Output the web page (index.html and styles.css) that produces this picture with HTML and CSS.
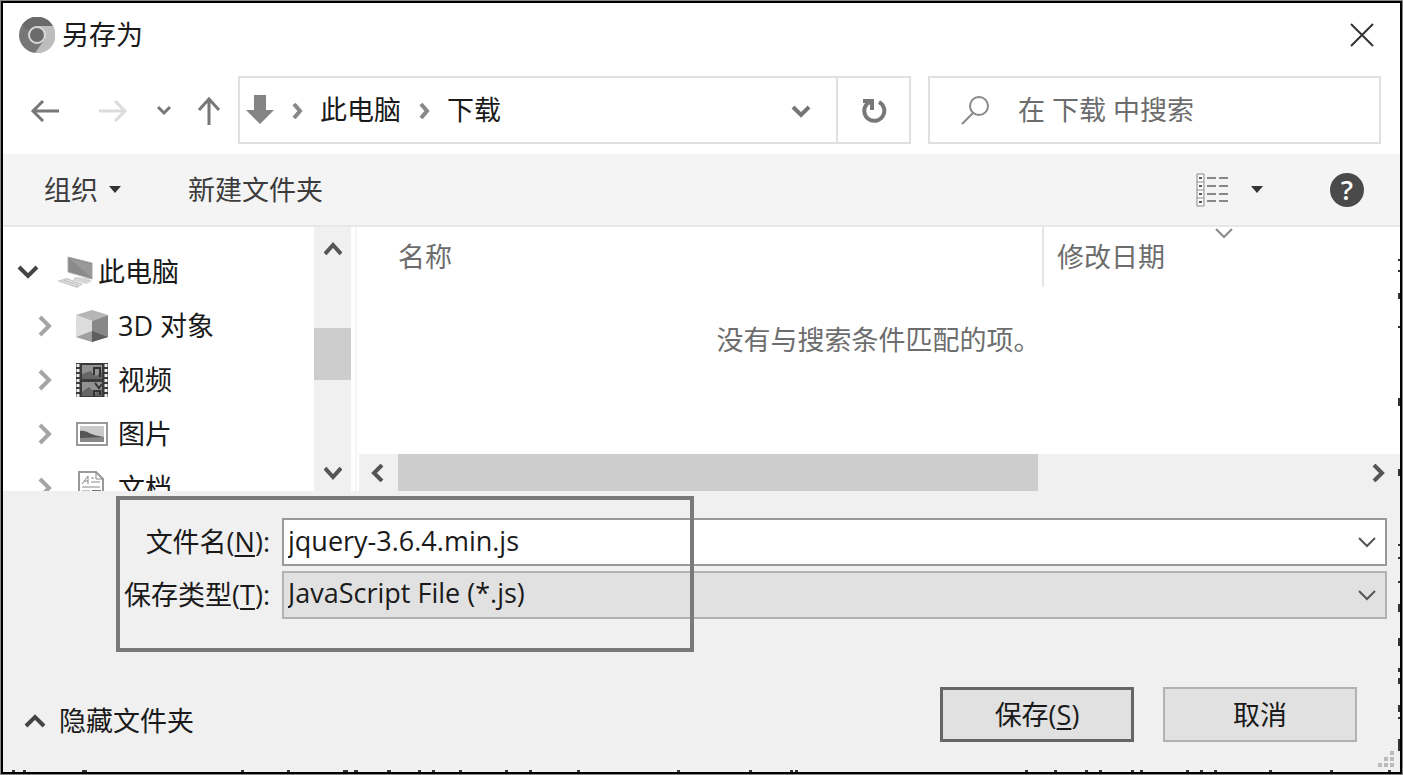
FILE: index.html
```html
<!DOCTYPE html>
<html lang="zh-CN">
<head>
    <meta charset="UTF-8">
    <meta name="viewport" content="width=device-width, initial-scale=1.0">
    <title>另存为</title>
    <link rel="stylesheet" href="styles.css">
</head>
<body>

<form class="dialog">
    <header class="title-bar">
        <svg class="logo" width="36" height="36" viewBox="0 0 36 36">
            <circle cx="18" cy="18" r="18" fill="#777"/>
            <path d="M18 9H34A18 18 0 0 1 16 36L26 22Z" fill="#bdbdbd"/>
            <path d="M3 8A18 18 0 0 1 34 9H18A9 9 0 0 0 10 14Z" fill="#6a6a6a"/>
            <circle cx="18" cy="18" r="8" fill="#6b6b6b" stroke="#d8d8d8" stroke-width="2"/>
        </svg>
        <h1>另存为</h1>
        <button type="button" class="close" aria-label="关闭">
            <svg width="24" height="24" viewBox="0 0 24 24"><path d="M1 1L23 23M23 1L1 23" stroke="#333" stroke-width="2"/></svg>
        </button>
    </header>

    <!-- 导航栏 -->
    <nav class="nav-bar">
        <button type="button" class="nav-btn" aria-label="后退">
            <svg width="30" height="24" viewBox="0 0 30 24"><path d="M29 13H3M13 3L3 13L13 23" fill="none" stroke="#777" stroke-width="3"/></svg>
        </button>
        <button type="button" class="nav-btn" aria-label="前进">
            <svg width="30" height="24" viewBox="0 0 30 24"><path d="M1 13H27M17 3L27 13L17 23" fill="none" stroke="#dcdcdc" stroke-width="3"/></svg>
        </button>
        <button type="button" class="nav-btn recent" aria-label="最近的位置">
            <svg width="14" height="12" viewBox="0 0 14 12"><path d="M1 3L7 9L13 3" fill="none" stroke="#777" stroke-width="3"/></svg>
        </button>
        <button type="button" class="nav-btn up" aria-label="向上">
            <svg width="24" height="30" viewBox="0 0 24 30"><path d="M12 30V4M2 15L12 4L22 15" fill="none" stroke="#777" stroke-width="3"/></svg>
        </button>
        <div class="address">
            <svg width="28" height="30" viewBox="0 0 28 30"><path d="M8 0H20V15H28L14 29L0 15H8Z" fill="#848484"/></svg>
            <svg class="sep" width="11" height="18" viewBox="0 0 11 18"><path d="M2 3L8 10L2 17" fill="none" stroke="#888" stroke-width="4"/></svg>
            <a href="#">此电脑</a>
            <svg class="sep" width="11" height="18" viewBox="0 0 11 18"><path d="M2 3L8 10L2 17" fill="none" stroke="#888" stroke-width="4"/></svg>
            <a href="#">下载</a>
            <button type="button" class="history" aria-label="以前的位置">
                <svg width="22" height="16" viewBox="0 0 22 16"><path d="M3 5L11 13L19 5" fill="none" stroke="#777" stroke-width="4"/></svg>
            </button>
            <button type="button" class="refresh" aria-label="刷新">
                <svg width="26" height="30" viewBox="0 0 26 30"><path d="M18 7A10 10 0 1 1 6 9L10 6" fill="none" stroke="#777" stroke-width="4"/><path d="M2 6H11V15" fill="none" stroke="#777" stroke-width="4"/></svg>
            </button>
        </div>
        <label class="search">
            <svg width="30" height="30" viewBox="0 0 30 30"><circle cx="19" cy="11" r="9" fill="none" stroke="#888" stroke-width="2"/><path d="M13 18L2 29" stroke="#888" stroke-width="2"/></svg>
            <input type="search" placeholder="在 下载 中搜索" aria-label="搜索">
        </label>
    </nav>

    <div class="toolbar">
        <button type="button">组织
            <svg width="12" height="7" viewBox="0 0 12 7"><path d="M0 0H12L6 7Z" fill="#333"/></svg>
        </button>
        <button type="button">新建文件夹</button>
        <button type="button" class="view" aria-label="更改视图">
            <svg width="34" height="34" viewBox="0 0 34 34">
                <path d="M1 1H8V33H1ZM1 9H8M1 17H8M1 25H8" fill="#fff" stroke="#888" stroke-width="1"/>
                <path d="M3 5H6M3 13H6M3 21H6M3 29H6" stroke="#555" stroke-width="2"/>
                <path d="M11 5H20M23 5H32M11 13H20M23 13H32M11 21H20M23 21H32M11 28H20M23 28H32" stroke="#888" stroke-width="2"/>
            </svg>
            <svg width="12" height="7" viewBox="0 0 12 7"><path d="M0 0H12L6 7Z" fill="#333"/></svg>
        </button>
        <button type="button" class="help" aria-label="帮助">?</button>
    </div>

    <main class="content">
        <ul class="tree">
            <li class="root">
                <svg class="arrow" width="22" height="18" viewBox="0 0 22 18"><path d="M2 4L11 13L20 4" fill="none" stroke="#444" stroke-width="4"/></svg>
                <svg width="36" height="34" viewBox="0 0 36 34">
                    <path d="M11 2L35 8V24L11 17Z" fill="#8a8a8a" stroke="#aaa" stroke-width="1"/>
                    <path d="M13 4L34 9V22Z" fill="#999"/>
                    <path d="M18 22L30 23L35 26L29 29L16 25Z" fill="#d5d5d5"/>
                    <path d="M0 26L10 23L26 29L20 33Z" fill="#c8c8c8"/>
                    <path d="M5 26L20 31M10 25L23 30" stroke="#eee" stroke-dasharray="2 1"/>
                </svg>
                <span>此电脑</span>
            </li>
            <li>
                <svg class="arrow" width="14" height="22" viewBox="0 0 14 22"><path d="M2 2L11 11L2 20" fill="none" stroke="#a5a5a5" stroke-width="4"/></svg>
                <svg width="34" height="34" viewBox="0 0 34 34">
                    <path d="M17 1L33 6L17 12L1 6Z" fill="#b5b5b5"/>
                    <path d="M1 6L17 12V33L1 28Z" fill="#ddd"/>
                    <path d="M17 12L33 6V28L17 33Z" fill="#888"/>
                    <path d="M17 22L33 28L17 33Z" fill="#5e5e5e"/>
                    <path d="M17 22V33L1 28Z" fill="#a0a0a0"/>
                </svg>
                <span>3D 对象</span>
            </li>
            <li>
                <svg class="arrow" width="14" height="22" viewBox="0 0 14 22"><path d="M2 2L11 11L2 20" fill="none" stroke="#a5a5a5" stroke-width="4"/></svg>
                <svg width="34" height="34" viewBox="0 0 34 34">
                    <path d="M1 0H33V34H1Z" fill="#3a3a3a"/>
                    <path d="M3 1V34M31 1V34" stroke="#eee" stroke-width="3" stroke-dasharray="3 2"/>
                    <path d="M7 2H27V16H7ZM7 19H27V33H7Z" fill="#929292"/>
                    <path d="M7 11L15 8L21 13L27 9V16H7ZM7 29L14 24L20 30L27 26V33H7Z" fill="#666"/>
                    <path d="M19 12V5H25V14M19 33V28H25V32M20 20L24 25L27 21" fill="none" stroke="#333" stroke-width="2"/>
                </svg>
                <span>视频</span>
            </li>
            <li>
                <svg class="arrow" width="14" height="22" viewBox="0 0 14 22"><path d="M2 2L11 11L2 20" fill="none" stroke="#a5a5a5" stroke-width="4"/></svg>
                <svg width="34" height="34" viewBox="0 0 34 34">
                    <path d="M2 6H32V28H2Z" fill="#fff" stroke="#999" stroke-width="2"/>
                    <path d="M5 9H29V25H5Z" fill="#c9c9c9"/>
                    <path d="M5 14C13 13 13 18 29 20V22H5Z" fill="#555"/>
                    <path d="M5 21L29 20V25H5Z" fill="#888"/>
                </svg>
                <span>图片</span>
            </li>
            <li>
                <svg class="arrow" width="14" height="22" viewBox="0 0 14 22"><path d="M2 2L11 11L2 20" fill="none" stroke="#a5a5a5" stroke-width="4"/></svg>
                <svg width="34" height="34" viewBox="0 0 34 34">
                    <path d="M4 1H21L28 8V33H4Z" fill="#fff" stroke="#999" stroke-width="2"/>
                    <path d="M21 1V8H28M7 13L13 5V13M9 10H13M16 7H19M16 11H25M7 16H25M7 20H15M7 24H15" fill="none" stroke="#888" stroke-width="1"/>
                    <path d="M17 19H26V27H17Z" fill="#777"/>
                </svg>
                <span>文档</span>
            </li>
        </ul>
        <div class="scroll-y">
            <svg width="18" height="16" viewBox="0 0 18 16"><path d="M1 13L9 4L17 13" fill="none" stroke="#555" stroke-width="4"/></svg>
            <div class="thumb"></div>
            <svg width="18" height="16" viewBox="0 0 18 16"><path d="M1 3L9 12L17 3" fill="none" stroke="#555" stroke-width="4"/></svg>
        </div>

        <section class="files">
            <table>
                <thead>
                    <tr>
                        <th class="name">名称</th>
                        <th class="date">修改日期
                            <svg class="sort" width="18" height="10" viewBox="0 0 18 10"><path d="M1 1L9 9L17 1" fill="none" stroke="#888" stroke-width="2"/></svg>
                        </th>
                    </tr>
                </thead>
                <tbody>
                    <tr><td colspan="2">没有与搜索条件匹配的项。</td></tr>
                </tbody>
            </table>
            <div class="scroll-x">
                <svg width="14" height="18" viewBox="0 0 14 18"><path d="M12 1L4 9L12 17" fill="none" stroke="#555" stroke-width="4"/></svg>
                <div class="thumb"></div>
                <svg width="14" height="18" viewBox="0 0 14 18"><path d="M2 1L10 9L2 17" fill="none" stroke="#555" stroke-width="4"/></svg>
            </div>
        </section>
    </main>

    <footer class="bottom">
        <div class="fields">
            <label for="fileName">文件名(<u>N</u>):</label>
            <div class="combo">
                <input type="text" id="fileName" value="jquery-3.6.4.min.js">
                <svg width="18" height="12" viewBox="0 0 18 12"><path d="M1 2L9 10L17 2" fill="none" stroke="#555" stroke-width="2"/></svg>
            </div>
            <label for="fileType">保存类型(<u>T</u>):</label>
            <div class="combo">
                <select id="fileType">
                    <option>JavaScript File (*.js)</option>
                </select>
                <svg width="18" height="12" viewBox="0 0 18 12"><path d="M1 2L9 10L17 2" fill="none" stroke="#555" stroke-width="2"/></svg>
            </div>
        </div>
        <div class="actions">
            <button type="button" class="hide-folders">
                <svg width="22" height="16" viewBox="0 0 22 16"><path d="M2 13L11 4L20 13" fill="none" stroke="#444" stroke-width="4"/></svg>
                隐藏文件夹
            </button>
            <button type="button" class="btn primary">保存(<u>S</u>)</button>
            <button type="button" class="btn">取消</button>
        </div>
        <div class="highlight"></div>
        <svg class="grip" width="18" height="17" viewBox="0 0 18 17"><path d="M12 0H16V4H12ZM6 6H10V10H6ZM12 6H16V10H12ZM0 12H4V16H0ZM6 12H10V16H6ZM12 12H16V16H12Z" fill="#bbb"/></svg>
    </footer>

    <!-- 窗口边缘露出的背景 -->
    <svg class="edge-right" width="2" height="769" viewBox="0 0 2 769">
        <path d="M1 256V258M1 267V269M1 290V296M1 323V325M1 395V403M1 466V473M1 541V543M1 554V556M1 578V580M1 601V609M1 635V643M1 665V669M1 675V681M1 702V709M1 714V716M1 736V748" stroke="#333" stroke-width="2"/>
    </svg>
    <svg class="edge-bottom" width="1397" height="2" viewBox="0 0 1397 2">
        <path d="M9 1H12M20 1H23M79 1H84M238 1H241M284 1H287M340 1H345M351 1H355M384 1H388M415 1H418M429 1H432M456 1H459M502 1H505M526 1H529M574 1H577M674 1H677M746 1H749M787 1H790M792 1H795M1022 1H1025M1051 1H1054M1082 1H1085M1096 1H1099M1128 1H1131M1137 1H1140M1183 1H1186M1197 1H1200M1211 1H1214M1266 1H1269M1327 1H1330M1385 1H1388" stroke="#333" stroke-width="2"/>
    </svg>
</form>

</body>
</html>
```
FILE: styles.css
```css
* {
    box-sizing: border-box;
}

body {
    margin: 0;
    padding: 1px;
    height: 100vh;
    background: #888;
    font-family: "Open Sans", "Noto Sans CJK SC", sans-serif;
    font-size: 27px;
    line-height: 36px;
    color: #1a1a1a;
}

button, input, select {
    font: inherit;
    color: inherit;
    margin: 0;
    padding: 0;
    border: none;
    background: none;
}

svg {
    display: block;
    flex: none;
}

a {
    color: inherit;
    text-decoration: none;
}

u {
    text-decoration-thickness: 2px;
    text-underline-offset: 3px;
}

.dialog {
    position: relative;
    display: flex;
    flex-direction: column;
    height: 100%;
    border: 2px solid #000;
    background: #fff;
    overflow: hidden;
}

.title-bar {
    display: flex;
    align-items: center;
    gap: 7px;
    height: 63px;
    padding: 0 26px 0 16px;
}

.title-bar h1 {
    margin: 0;
    font-size: 27px;
    font-weight: normal;
}

.close {
    margin-left: auto;
}

/* 导航栏 */
.nav-bar {
    display: flex;
    padding: 10px 19px 10px 8px;
}

.nav-btn {
    display: flex;
    align-items: center;
    justify-content: center;
    width: 68px;
}

.nav-btn.recent {
    width: 33px;
}

.nav-btn.up {
    width: 58px;
}

.address {
    display: flex;
    align-items: center;
    flex: 1;
    height: 68px;
    padding-left: 6px;
    border: 2px solid #e0e0e0;
}

.sep {
    margin: 0 17px 0 18px;
}

.history {
    margin-left: auto;
    padding: 0 24px;
}

.refresh {
    display: flex;
    align-items: center;
    justify-content: center;
    width: 73px;
    height: 100%;
    border-left: 2px solid #e0e0e0;
}

.search {
    display: flex;
    align-items: center;
    gap: 28px;
    width: 453px;
    margin-left: 17px;
    padding-left: 30px;
    border: 2px solid #e0e0e0;
}

.search input {
    flex: 1;
    min-width: 0;
    outline: none;
}

.search input::placeholder {
    color: #6d6d6d;
}

.toolbar {
    display: flex;
    align-items: center;
    height: 73px;
    padding: 0 36px 0 41px;
    background: #f4f4f4;
    border-bottom: 2px solid #e8e8e8;
    color: #3c3c3c;
}

.toolbar button {
    display: flex;
    align-items: center;
    gap: 11px;
    margin-right: 67px;
}

.toolbar .view {
    gap: 21px;
    margin-left: auto;
}

.toolbar .help {
    justify-content: center;
    width: 34px;
    height: 34px;
    margin: 0;
    border-radius: 50%;
    background: #4a4a4a;
    color: #fff;
    font-weight: 600;
}

/* 文件夹树和文件列表 */
.content {
    display: flex;
    flex: 1;
    min-height: 0;
    overflow: hidden;
}

.tree {
    width: 311px;
    margin: 0;
    padding: 18px 0 0;
    list-style: none;
    overflow: hidden;
}

.tree li {
    display: flex;
    align-items: center;
    gap: 9px;
    height: 54px;
    padding-left: 35px;
}

.tree .arrow {
    margin-right: 14px;
}

.tree .root {
    gap: 5px;
    padding-left: 14px;
}

.tree .root .arrow {
    margin-right: 13px;
}

.scroll-y {
    display: flex;
    flex-direction: column;
    align-items: center;
    width: 37px;
    padding: 14px 0 10px;
    background: #f0f0f0;
}

.scroll-y .thumb {
    width: 100%;
    height: 52px;
    margin: 71px 0 auto;
}

.thumb {
    background: #cdcdcd;
}

.files {
    display: flex;
    flex-direction: column;
    justify-content: space-between;
    flex: 1;
    margin-left: 4px;
    border-left: 2px solid #f5f5f5;
}

table {
    width: 100%;
    border-collapse: collapse;
    color: #6d6d6d;
}

th {
    position: relative;
    height: 60px;
    padding: 0 0 0 13px;
    font-weight: normal;
    text-align: left;
}

.name {
    width: 686px;
    padding-left: 41px;
    border-right: 2px solid #e5e5e5;
}

.sort {
    position: absolute;
    top: 1px;
    left: 48%;
}

td {
    height: 106px;
    padding: 0;
    text-align: center;
}

.scroll-x {
    display: flex;
    align-items: center;
    height: 37px;
    margin-left: 2px;
    padding: 0 14px 0 11px;
    background: #f0f0f0;
}

.scroll-x .thumb {
    width: 63%;
    height: 100%;
    margin: 0 auto 0 14px;
}

.bottom {
    position: relative;
    padding: 27px 13px 30px 0;
    background: #f0f0f0;
}

.fields {
    display: grid;
    grid-template-columns: 267px 1fr;
    align-items: center;
    gap: 5px 12px;
}

.fields label {
    text-align: right;
}

.combo {
    position: relative;
}

.combo input, .combo select {
    display: block;
    width: 100%;
    height: 48px;
    padding: 0 44px 4px 4px;
    border: 2px solid #999;
    border-radius: 0;
    background: #fff;
    outline: none;
}

.combo select {
    appearance: none;
    background: #e1e1e1;
    border-color: #b2b2b2;
}

.combo svg {
    position: absolute;
    top: 18px;
    right: 11px;
    pointer-events: none;
}

.actions {
    display: flex;
    align-items: center;
    gap: 29px;
    margin-top: 68px;
    padding: 0 30px 0 21px;
}

.hide-folders {
    display: flex;
    align-items: center;
    gap: 13px;
    margin-right: auto;
    padding-top: 12px;
}

.btn {
    width: 194px;
    height: 55px;
    border: 2px solid #b2b2b2;
    background: #e1e1e1;
}

.btn.primary {
    border: 3px solid #666;
}

/* 标注框 */
.highlight {
    position: absolute;
    top: 5px;
    left: 113px;
    width: 578px;
    height: 156px;
    border: 4px solid #7a7a7a;
    pointer-events: none;
}

.grip {
    position: absolute;
    right: 4px;
    bottom: 4px;
}

.edge-right {
    position: absolute;
    top: 0;
    right: 0;
}

.edge-bottom {
    position: absolute;
    left: 0;
    bottom: 0;
}
```
